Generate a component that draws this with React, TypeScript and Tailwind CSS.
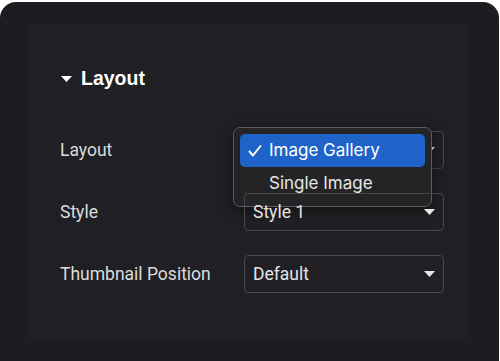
import React from "react";

function Caret({ className }: { className?: string }) {
  return (
    <svg width="11" height="6" viewBox="0 0 11 6" className={className}>
      <path d="M0 0 H11 L5.5 6 Z" fill="currentColor" />
    </svg>
  );
}

function Select({ value }: { value: string }) {
  return (
    <div className="w-[200px] h-[38px] border border-[#46474b] rounded-[4px] flex items-center justify-between pl-[8px] pr-[8px] text-[17.5px] text-[#e4e4e6] font-['Roboto',sans-serif]">
      <span>{value}</span>
      <Caret className="text-[#e8e8ea]" />
    </div>
  );
}

export default function App() {
  const rows = [
    { label: "Layout", value: "Image Gallery", open: true },
    { label: "Style", value: "Style 1" },
    { label: "Thumbnail Position", value: "Default" },
  ];

  return (
    <div className="w-[500px] h-[361px] bg-white pt-[2px] overflow-hidden">
      <div className="w-[499px] h-[370px] bg-[#1c1d20] rounded-t-[16px] pt-[22px] px-[30px]">
        <div className="h-[316px] bg-[#202024] pl-[30px] pr-[25px] pt-[44px]">
          {/* Section header */}
          <div className="flex items-center gap-[9px] h-[22px] text-white font-['Liberation_Sans',sans-serif] font-bold text-[19.5px]">
            <Caret className="text-white ml-[1px]" />
            <span>Layout</span>
          </div>

          <div className="mt-[41px] flex flex-col gap-[24px]">
            {rows.map((row) => (
              <div key={row.label} className="flex items-center relative">
                <div className="w-[185px] text-[17.5px] text-[#dcdcde] font-['Roboto',sans-serif]">
                  {row.label}
                </div>
                <div className="relative">
                  <Select value={row.value} />
                  {row.open && (
                    <div className="absolute left-[-11px] top-[-4px] w-[199px] h-[80px] bg-[#242427] border border-[#5b5b60] rounded-[7px] p-[6px] shadow-[0_4px_14px_rgba(0,0,0,0.45)] font-['Inter',sans-serif] text-[17px] text-[#e6e6e8]">
                      <div className="h-[33px] bg-[#1f63c9] rounded-[5px] flex items-center pl-[8px] gap-[7px] text-white">
                        <svg width="14" height="14" viewBox="0 0 14 14" className="shrink-0">
                          <path d="M1.5 7.5 L5 11.5 L12.5 2" fill="none" stroke="white" strokeWidth="2" strokeLinecap="round" strokeLinejoin="round" />
                        </svg>
                        <span>Image Gallery</span>
                      </div>
                      <div className="h-[33px] flex items-center pl-[29px]">Single Image</div>
                    </div>
                  )}
                </div>
              </div>
            ))}
          </div>
        </div>
      </div>
    </div>
  );
}
